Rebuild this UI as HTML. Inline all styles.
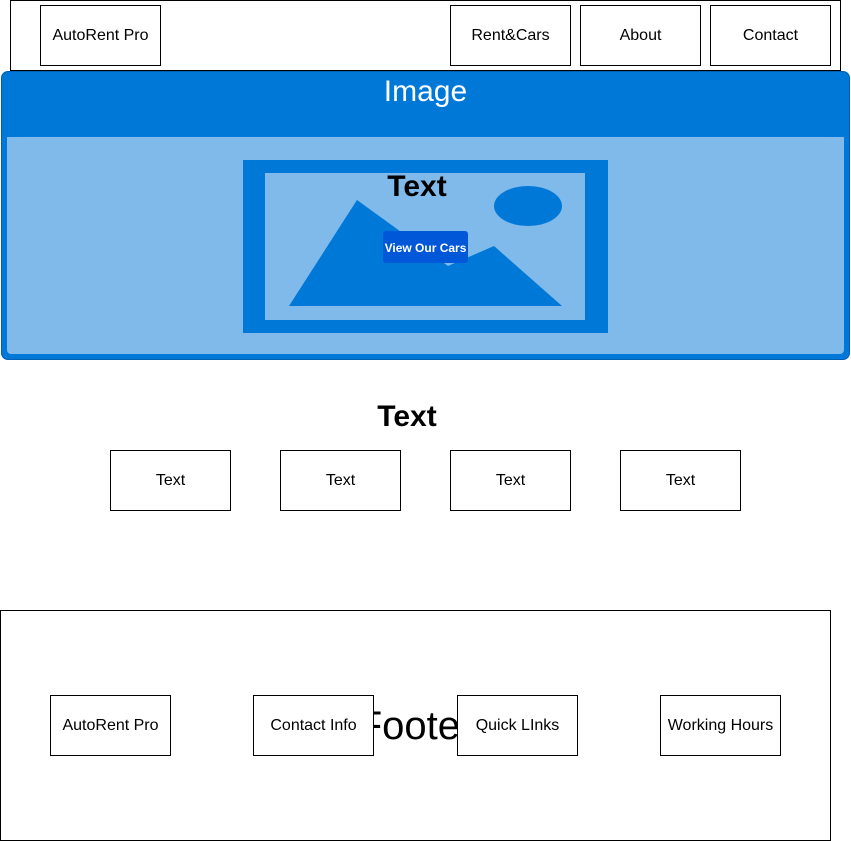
<!DOCTYPE html>
<html><head><meta charset="utf-8"><style>
html,body{margin:0;padding:0;width:851px;height:841px;background:#fff;overflow:hidden;font-family:"Liberation Sans",Arial,sans-serif;}
.a{position:absolute;box-sizing:border-box;}
.b{border:1px solid #000;background:#fff;display:flex;align-items:center;justify-content:center;font-size:16px;color:#000;padding-top:1px;}
</style></head><body>
<div class="a" style="left:10px;top:0;width:831px;height:71px;border:1px solid #000;"></div>
<div class="a b" style="left:40px;top:5px;width:121px;height:61px;">AutoRent Pro</div>
<div class="a b" style="left:450px;top:5px;width:121px;height:61px;">Rent&amp;Cars</div>
<div class="a b" style="left:580px;top:5px;width:121px;height:61px;">About</div>
<div class="a b" style="left:710px;top:5px;width:121px;height:61px;">Contact</div>

<div class="a" style="left:1px;top:71px;width:849px;height:289px;background:#0078D7;border-radius:7px;border:1px solid #005FAF;"></div>
<div class="a" style="left:7px;top:137px;width:837px;height:217px;background:#7FBAEA;border-radius:0 0 4px 4px;"></div>
<div class="a" style="left:0;top:74px;width:851px;text-align:center;color:#fff;font-size:30px;line-height:36px;">Image</div>
<svg class="a" style="left:0;top:0" width="851" height="841">
<rect x="243" y="160" width="365" height="173" fill="#0078D7"/>
<rect x="265" y="173" width="320" height="147" fill="#7FBAEA"/>
<ellipse cx="528" cy="206" rx="34" ry="20" fill="#0078D7"/>
<polygon points="289,306 357,200 448,266 494,246 562,306" fill="#0078D7"/>
<rect x="383" y="231" width="85" height="32" rx="3" fill="#0057D8"/>
</svg>
<div class="a" style="left:0;top:169px;width:834px;text-align:center;font-size:30px;font-weight:bold;line-height:36px;">Text</div>
<div class="a" style="left:383px;top:232px;width:85px;height:32px;display:flex;align-items:center;justify-content:center;color:#fff;font-size:12px;font-weight:bold;">View Our Cars</div>

<div class="a" style="left:0;top:399px;width:814px;text-align:center;font-size:30px;font-weight:bold;line-height:36px;">Text</div>
<div class="a b" style="left:110px;top:450px;width:121px;height:61px;">Text</div>
<div class="a b" style="left:280px;top:450px;width:121px;height:61px;">Text</div>
<div class="a b" style="left:450px;top:450px;width:121px;height:61px;">Text</div>
<div class="a b" style="left:620px;top:450px;width:121px;height:61px;">Text</div>

<div class="a" style="left:0;top:610px;width:831px;height:231px;border:1px solid #000;"></div>
<div class="a" style="left:0;top:703px;width:831px;text-align:center;font-size:40px;line-height:46px;">Footer</div>
<div class="a b" style="left:50px;top:695px;width:121px;height:61px;">AutoRent Pro</div>
<div class="a b" style="left:253px;top:695px;width:121px;height:61px;">Contact Info</div>
<div class="a b" style="left:457px;top:695px;width:121px;height:61px;">Quick LInks</div>
<div class="a b" style="left:660px;top:695px;width:121px;height:61px;">Working Hours</div>
</body></html>
